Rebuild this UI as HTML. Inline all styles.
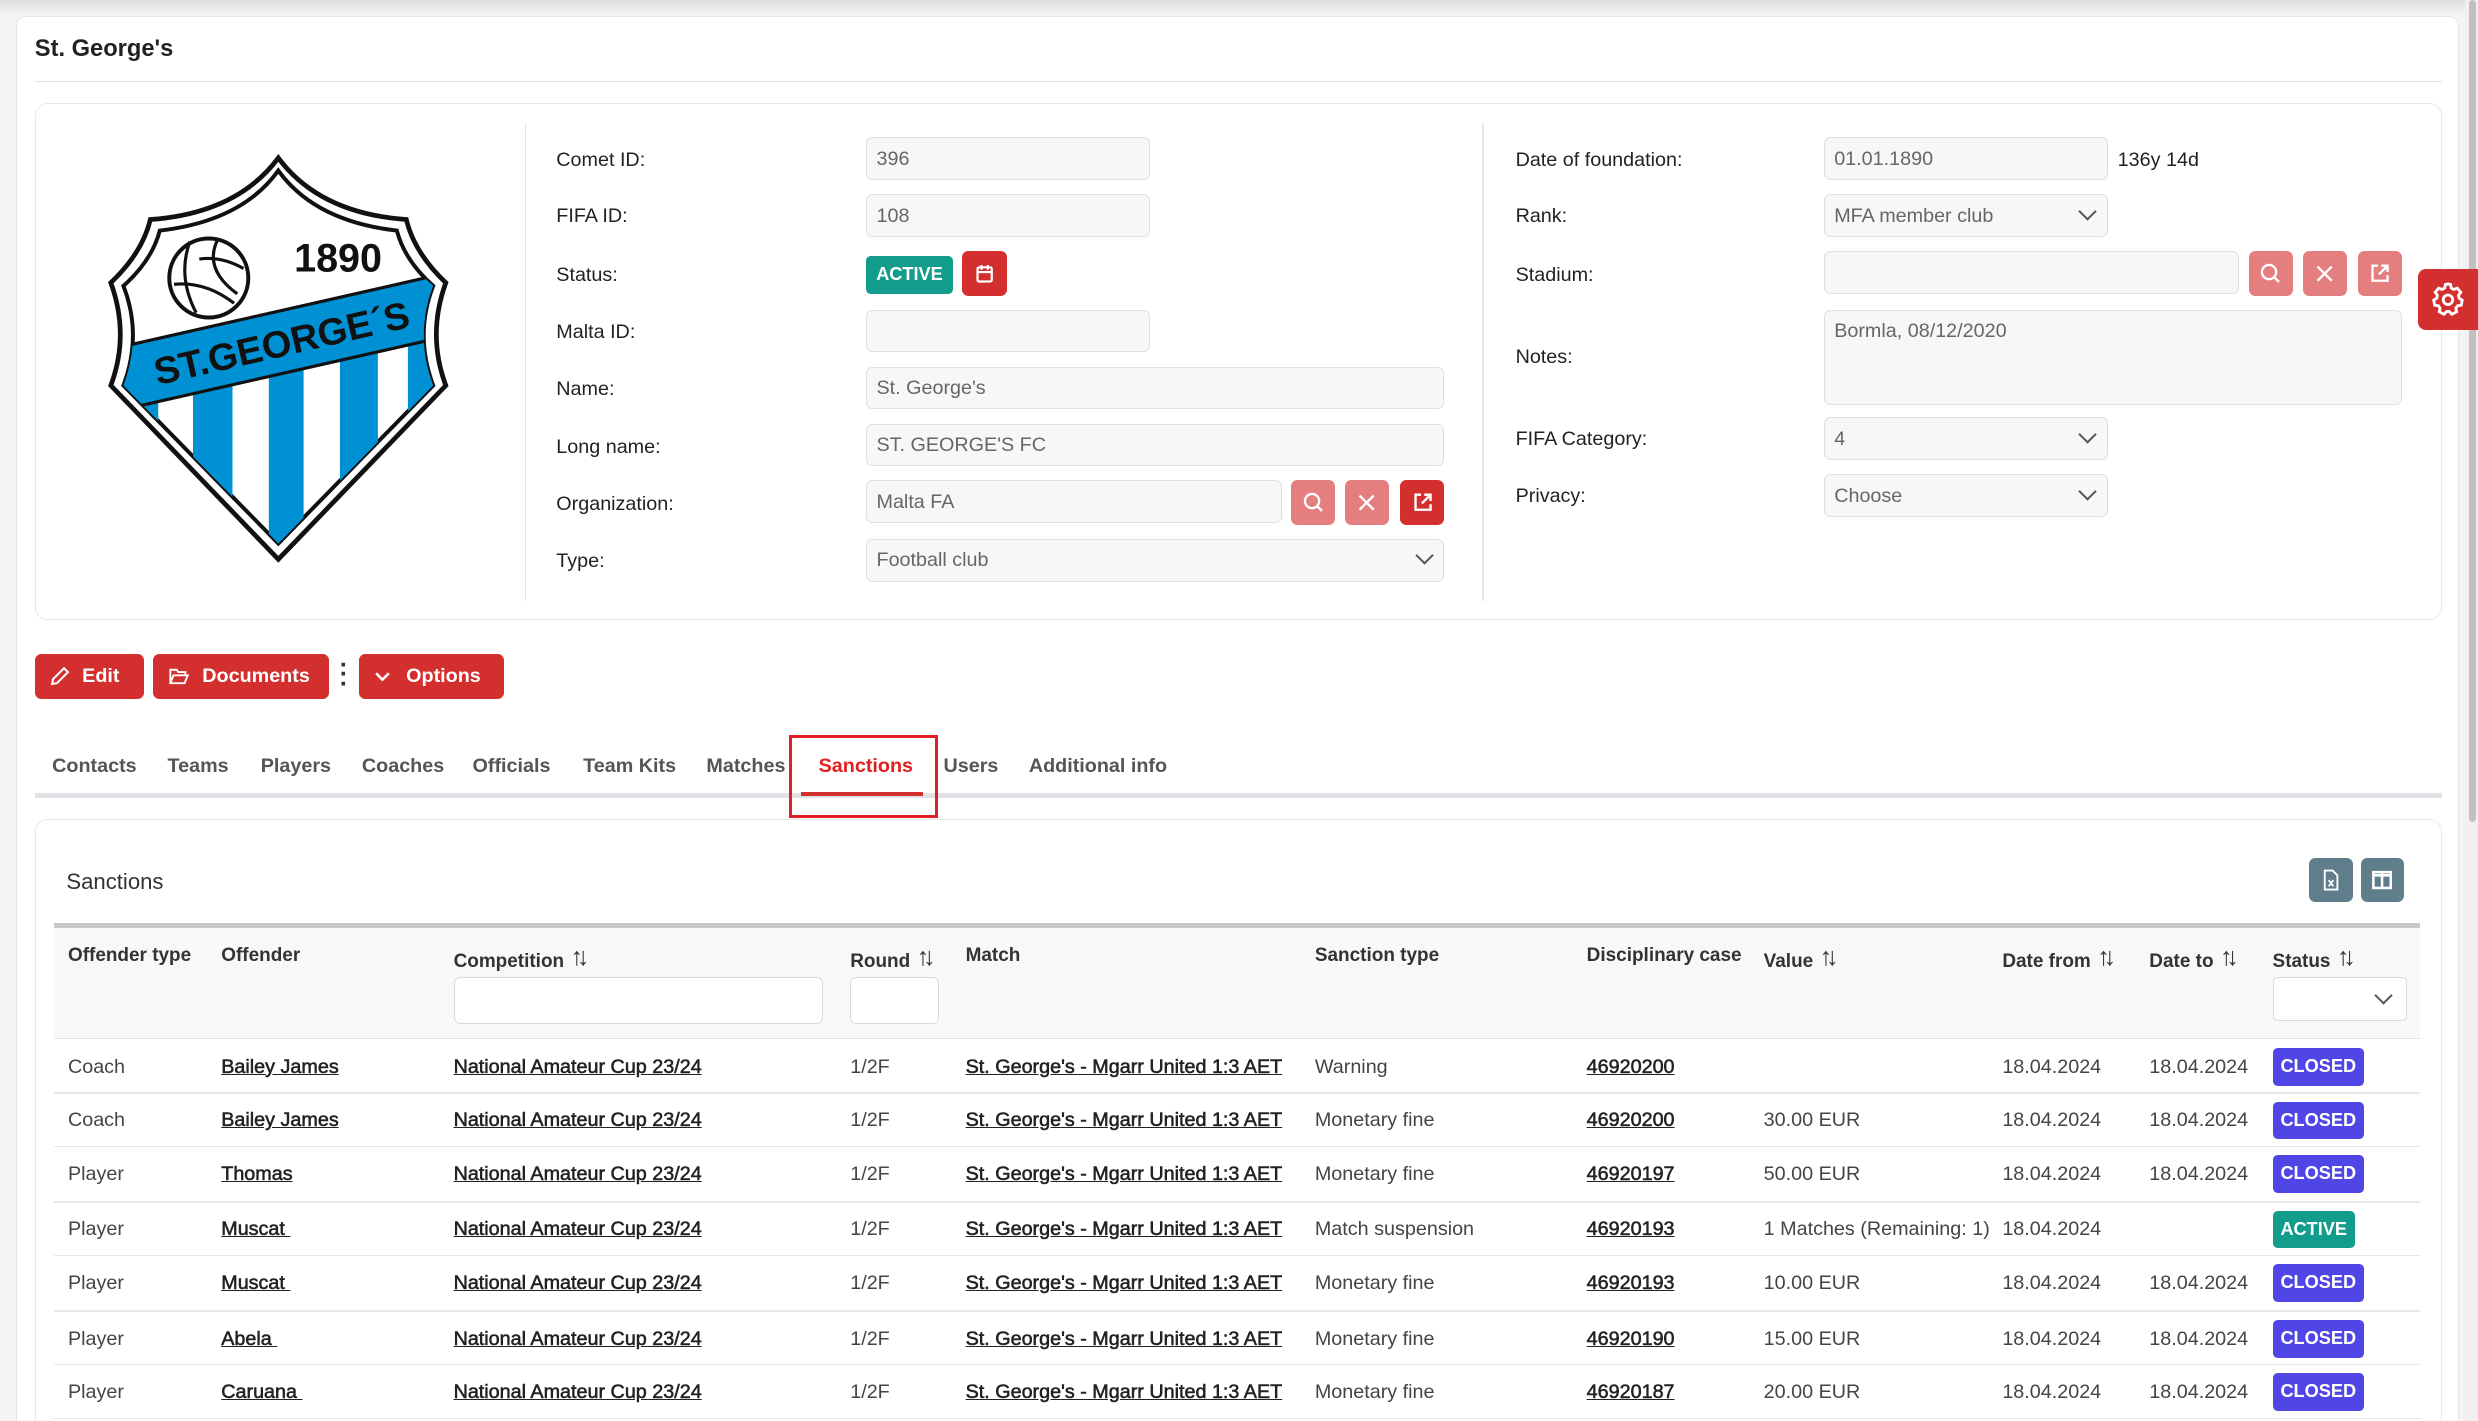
<!DOCTYPE html>
<html><head><meta charset="utf-8"><style>
html,body{margin:0;padding:0;background:#f4f4f5;overflow:hidden}
body{zoom:1.58036;width:1568px;height:899px;position:relative;font-family:"Liberation Sans",sans-serif;color:#333;font-size:12.5px}
.a{position:absolute}
.topbar{left:0;top:0;width:1568px;height:9px;background:linear-gradient(#dcdcdc,#f4f4f5)}
.outer{left:10px;top:10px;width:1545px;height:900px;background:#fff;border:1px solid #e6e6e6;border-radius:6px}
.sb{left:1560px;top:0;width:8px;height:899px;background:#f0f0f0}
.sbt{left:1562px;top:0;width:5px;height:520px;background:#c1c1c1;border-radius:3px}
.card{border:1px solid #e7e8ea;border-radius:8px;background:#fff}
.lbl{font-size:12.5px;color:#222}
.inp{background:#f7f7f7;border:1px solid #dcdfe3;border-radius:4px;height:27px;box-sizing:border-box;font-size:12.5px;color:#666;padding:6px 6px;line-height:14px}
.chev{position:absolute;right:8px;top:8px;width:7px;height:7px;border-right:1.3px solid #555;border-bottom:1.3px solid #555;transform:rotate(45deg);top:6px}
.ib{width:28px;height:28px;border-radius:4px;background:#e57f7f;box-sizing:border-box}
.ib.d{background:#d32f2f}
.ib svg{display:block;margin:6px}
.btn{background:#d32f2f;color:#fff;border-radius:4px;height:28px;font-size:12.5px;font-weight:bold;line-height:28px;box-sizing:border-box}
.tab{top:478px;font-size:12.5px;font-weight:bold;color:#555}
.th{top:598px;font-weight:bold;font-size:12px;color:#333}
.srt{font-weight:normal;font-size:16px;margin-left:4px;letter-spacing:-4px;color:#333;position:relative;top:-1px}
.td{font-size:12.5px;color:#444}
.lk{color:#222;text-decoration:underline;font-weight:normal;-webkit-text-stroke:0.35px #222}
.bdg{left:1438px;height:24px;line-height:24px;padding:0 5px;color:#fff;font-weight:bold;font-size:11.5px;border-radius:3px;background:#4f46e5}
.bdg.g{background:#119c8b}
.rl{left:34px;width:1497px;height:1px;background:#e8e8e8}
</style></head><body>
<div class="a topbar"></div>
<div class="a outer"></div>
<div class="a sb"></div><div class="a sbt"></div>
<div class="a" style="left:22px;top:23px;font-size:15px;font-weight:bold;color:#222">St. George's</div>
<div class="a" style="left:22px;top:51px;width:1523px;height:1px;background:#e0e0e0"></div>

<div class="a card" style="left:22px;top:65px;width:1522px;height:326px"></div>
<div class="a" style="left:332px;top:78px;width:1px;height:302px;background:#e6e6e6"></div>
<div class="a" style="left:938px;top:78px;width:1px;height:302px;background:#e6e6e6"></div>

<svg class="a" style="left:60px;top:95px" width="240" height="265" viewBox="60 95 240 265">
<defs><clipPath id="cp"><path d="M176,108 Q153,140 101,146 Q96,165 78,181 Q90,212 78,244 L176,344 L274,244 Q262,212 274,181 Q256,165 251,146 Q199,140 176,108Z"/></clipPath></defs>
<path d="M176,100 Q150,135 95,139 Q90,160 70,179 Q82,212 70,244 L176,354 L282,244 Q270,212 282,179 Q262,160 257,139 Q202,135 176,100Z" fill="#fff" stroke="#111" stroke-width="3"/>
<path d="M176,108 Q153,140 101,146 Q96,165 78,181 Q90,212 78,244 L176,344 L274,244 Q262,212 274,181 Q256,165 251,146 Q199,140 176,108Z" fill="#fff" stroke="#111" stroke-width="2.5"/>
<g clip-path="url(#cp)">
<rect x="80" y="240" width="20" height="130" fill="#0091d5"/>
<rect x="122" y="230" width="25" height="140" fill="#0091d5"/>
<rect x="170" y="220" width="22" height="150" fill="#0091d5"/>
<rect x="215" y="210" width="24" height="160" fill="#0091d5"/>
<rect x="258" y="200" width="20" height="170" fill="#0091d5"/>
<polygon points="70,221 282,173 282,213 70,261" fill="#0091d5" stroke="#111" stroke-width="2"/>
</g>
<text x="178" y="226" text-anchor="middle" transform="rotate(-13 176 217)" font-family="Liberation Sans" font-weight="bold" font-size="24" fill="#111" textLength="165" lengthAdjust="spacingAndGlyphs">ST.GEORGE´S</text>
<circle cx="132" cy="176" r="25" fill="#fff" stroke="#111" stroke-width="2.5"/>
<path d="M120,153 Q112,175 124,198 M138,151 Q128,170 150,186 M110,180 Q130,178 148,192 M126,164 Q140,162 154,170" fill="none" stroke="#111" stroke-width="2"/>
<text x="186" y="172" font-family="Liberation Sans" font-weight="bold" font-size="25" fill="#111">1890</text>
</svg>

<!-- left fields -->
<div class="a lbl" style="left:352px;top:94px">Comet ID:</div>
<div class="a inp" style="left:548px;top:87px;width:180px">396</div>
<div class="a lbl" style="left:352px;top:130px">FIFA ID:</div>
<div class="a inp" style="left:548px;top:123px;width:180px">108</div>
<div class="a lbl" style="left:352px;top:167px">Status:</div>
<div class="a" style="left:548px;top:162px;width:55px;height:24px;background:#119c8b;border-radius:3px;color:#fff;font-weight:bold;font-size:11.5px;line-height:24px;text-align:center">ACTIVE</div>
<div class="a ib d" style="left:609px;top:159px;width:28px;height:28px"><svg width="16" height="16" viewBox="0 0 16 16"><rect x="3.5" y="4" width="9" height="9" rx="1" fill="none" stroke="#fff" stroke-width="1.4"/><path d="M3.5,7h9M6,2.5v3M10,2.5v3" stroke="#fff" stroke-width="1.4"/></svg></div>
<div class="a lbl" style="left:352px;top:203px">Malta ID:</div>
<div class="a inp" style="left:548px;top:196px;width:180px"></div>
<div class="a lbl" style="left:352px;top:239px">Name:</div>
<div class="a inp" style="left:548px;top:232px;width:366px">St. George's</div>
<div class="a lbl" style="left:352px;top:276px">Long name:</div>
<div class="a inp" style="left:548px;top:268px;width:366px">ST. GEORGE'S FC</div>
<div class="a lbl" style="left:352px;top:312px">Organization:</div>
<div class="a inp" style="left:548px;top:304px;width:263px">Malta FA</div>
<div class="a ib" style="left:817px;top:304px"><svg width="16" height="16" viewBox="0 0 16 16"><circle cx="7" cy="7" r="4.5" fill="none" stroke="#fff" stroke-width="1.5"/><path d="M10.3,10.3l3,3" stroke="#fff" stroke-width="1.5"/></svg></div>
<div class="a ib" style="left:851px;top:304px"><svg width="16" height="16" viewBox="0 0 16 16"><path d="M3.5,3.5l9,9M12.5,3.5l-9,9" stroke="#fff" stroke-width="1.5"/></svg></div>
<div class="a ib d" style="left:886px;top:304px"><svg width="16" height="16" viewBox="0 0 16 16"><path d="M7,3H3.5v9.5H13V9M9,3h4v4M13,3L7.5,8.5" fill="none" stroke="#fff" stroke-width="1.5"/></svg></div>
<div class="a lbl" style="left:352px;top:348px">Type:</div>
<div class="a inp" style="left:548px;top:341px;width:366px">Football club<span class="chev"></span></div>

<!-- right fields -->
<div class="a lbl" style="left:959px;top:94px">Date of foundation:</div>
<div class="a inp" style="left:1154px;top:87px;width:180px">01.01.1890</div>
<div class="a lbl" style="left:1340px;top:94px">136y 14d</div>
<div class="a lbl" style="left:959px;top:130px">Rank:</div>
<div class="a inp" style="left:1154px;top:123px;width:180px">MFA member club<span class="chev"></span></div>
<div class="a lbl" style="left:959px;top:167px">Stadium:</div>
<div class="a inp" style="left:1154px;top:159px;width:263px"></div>
<div class="a ib" style="left:1423px;top:159px"><svg width="16" height="16" viewBox="0 0 16 16"><circle cx="7" cy="7" r="4.5" fill="none" stroke="#fff" stroke-width="1.5"/><path d="M10.3,10.3l3,3" stroke="#fff" stroke-width="1.5"/></svg></div>
<div class="a ib" style="left:1457px;top:159px"><svg width="16" height="16" viewBox="0 0 16 16"><path d="M3.5,3.5l9,9M12.5,3.5l-9,9" stroke="#fff" stroke-width="1.5"/></svg></div>
<div class="a ib" style="left:1492px;top:159px"><svg width="16" height="16" viewBox="0 0 16 16"><path d="M7,3H3.5v9.5H13V9M9,3h4v4M13,3L7.5,8.5" fill="none" stroke="#fff" stroke-width="1.5"/></svg></div>
<div class="a lbl" style="left:959px;top:219px">Notes:</div>
<div class="a inp" style="left:1154px;top:196px;width:366px;height:60px">Bormla, 08/12/2020</div>
<div class="a lbl" style="left:959px;top:271px">FIFA Category:</div>
<div class="a inp" style="left:1154px;top:264px;width:180px">4<span class="chev"></span></div>
<div class="a lbl" style="left:959px;top:307px">Privacy:</div>
<div class="a inp" style="left:1154px;top:300px;width:180px">Choose<span class="chev"></span></div>

<div class="a" style="left:1530px;top:170px;width:38px;height:39px;background:#d32f2f;border-radius:5px 0 0 5px"><svg width="24" height="24" viewBox="0 0 24 24" style="margin:7px"><path d="M12,2.5l1.6,0.3 0.5,2.3 1.6,0.9 2.2-0.8 2.2,2.6-1.4,1.9 0.3,1.8 2,1.2-0.6,3.3-2.3,0.3-1.1,1.5 0.5,2.3-3,1.6-1.6-1.7h-1.8l-1.6,1.7-3-1.6 0.5-2.3-1.1-1.5-2.3-0.3-0.6-3.3 2-1.2 0.3-1.8-1.4-1.9 2.2-2.6 2.2,0.8 1.6-0.9 0.5-2.3z" fill="none" stroke="#fff" stroke-width="1.8"/><circle cx="12" cy="12.5" r="3" fill="none" stroke="#fff" stroke-width="1.8"/></svg></div>

<!-- action buttons -->
<div class="a btn" style="left:22px;top:414px;width:69px;padding-left:30px">Edit<svg class="a" style="left:9px;top:7px" width="14" height="14" viewBox="0 0 14 14"><path d="M2,12l0.5-3 7-7 2.5,2.5-7,7z" fill="none" stroke="#fff" stroke-width="1.3"/></svg></div>
<div class="a btn" style="left:97px;top:414px;width:111px;padding-left:31px">Documents<svg class="a" style="left:9px;top:7px" width="14" height="14" viewBox="0 0 14 14"><path d="M1.5,11.5V3h4l1,1.5h4.5v2M1.5,11.5l2-5h9l-2,5z" fill="none" stroke="#fff" stroke-width="1.2"/></svg></div>
<div class="a" style="left:215px;top:418px;font-weight:bold;font-size:16px;line-height:6px;color:#333">·<br>·<br>·</div>
<div class="a btn" style="left:227px;top:414px;width:92px;padding-left:30px">Options<svg class="a" style="left:9px;top:8px" width="12" height="12" viewBox="0 0 12 12"><path d="M2,4l4,4 4-4" fill="none" stroke="#fff" stroke-width="1.6"/></svg></div>

<!-- tabs -->
<div class="a tab" style="left:33px">Contacts</div>
<div class="a tab" style="left:106px">Teams</div>
<div class="a tab" style="left:165px">Players</div>
<div class="a tab" style="left:229px">Coaches</div>
<div class="a tab" style="left:299px">Officials</div>
<div class="a tab" style="left:369px">Team Kits</div>
<div class="a tab" style="left:447px">Matches</div>
<div class="a tab" style="left:518px;color:#e01f1f">Sanctions</div>
<div class="a tab" style="left:597px">Users</div>
<div class="a tab" style="left:651px">Additional info</div>
<div class="a" style="left:22px;top:502px;width:1523px;height:3px;background:#dfe1e4"></div>
<div class="a" style="left:507px;top:501px;width:77px;height:3px;background:#d32f2f"></div>
<div class="a" style="left:499px;top:465px;width:91px;height:49px;border:2px solid #e51d24"></div>

<!-- sanctions card -->
<div class="a card" style="left:22px;top:518px;width:1522px;height:400px;border-bottom:none"></div>
<div class="a" style="left:42px;top:550px;font-size:14px;color:#333">Sanctions</div>
<div class="a" style="left:1461px;top:543px;width:28px;height:28px;background:#607d8b;border-radius:4px"><svg width="14" height="14" viewBox="0 0 14 14" style="margin:7px"><path d="M3,1h5l3,3v9H3z" fill="none" stroke="#fff" stroke-width="1.2"/><path d="M5.5,7l3,4M8.5,7l-3,4" stroke="#fff" stroke-width="1.1"/></svg></div>
<div class="a" style="left:1494px;top:543px;width:27px;height:28px;background:#607d8b;border-radius:4px"><svg width="14" height="14" viewBox="0 0 14 14" style="margin:7px 6px"><rect x="1.5" y="2" width="11" height="10" fill="none" stroke="#fff" stroke-width="1.6"/><path d="M7,2v10M1.5,4h11" stroke="#fff" stroke-width="1.6"/></svg></div>

<div class="a" style="left:34px;top:584px;width:1497px;height:3px;background:#c9c9c9"></div>
<div class="a" style="left:34px;top:587px;width:1497px;height:70px;background:#f7f8fa;border-bottom:1px solid #e3e3e3"></div>
<div class="a th" style="left:43px">Offender type</div>
<div class="a th" style="left:140px">Offender</div>
<div class="a th" style="left:287px">Competition<span class="srt">↑↓</span></div>
<div class="a th" style="left:538px">Round<span class="srt">↑↓</span></div>
<div class="a th" style="left:611px">Match</div>
<div class="a th" style="left:832px">Sanction type</div>
<div class="a th" style="left:1004px">Disciplinary case</div>
<div class="a th" style="left:1116px">Value<span class="srt">↑↓</span></div>
<div class="a th" style="left:1267px">Date from<span class="srt">↑↓</span></div>
<div class="a th" style="left:1360px">Date to<span class="srt">↑↓</span></div>
<div class="a th" style="left:1438px">Status<span class="srt">↑↓</span></div>
<div class="a" style="left:287px;top:618px;width:234px;height:30px;background:#fff;border:1px solid #d9d9d9;border-radius:4px;box-sizing:border-box"></div>
<div class="a" style="left:538px;top:618px;width:56px;height:30px;background:#fff;border:1px solid #d9d9d9;border-radius:4px;box-sizing:border-box"></div>
<div class="a" style="left:1438px;top:618px;width:85px;height:28px;background:#fff;border:1px solid #d9d9d9;border-radius:3px;box-sizing:border-box"><span class="chev" style="right:10px;top:7px"></span></div>

<!-- rows -->
<div class="a td" style="left:43px;top:668px">Coach</div><div class="a td lk" style="left:140px;top:668px">Bailey James</div><div class="a td lk" style="left:287px;top:668px">National Amateur Cup 23/24</div><div class="a td" style="left:538px;top:668px">1/2F</div><div class="a td lk" style="left:611px;top:668px">St. George's - Mgarr United 1:3 AET</div><div class="a td" style="left:832px;top:668px">Warning</div><div class="a td lk" style="left:1004px;top:668px">46920200</div><div class="a td" style="left:1267px;top:668px">18.04.2024</div><div class="a td" style="left:1360px;top:668px">18.04.2024</div><div class="a bdg" style="top:663px">CLOSED</div>
<div class="a rl" style="top:691px"></div>
<div class="a td" style="left:43px;top:702px">Coach</div><div class="a td lk" style="left:140px;top:702px">Bailey James</div><div class="a td lk" style="left:287px;top:702px">National Amateur Cup 23/24</div><div class="a td" style="left:538px;top:702px">1/2F</div><div class="a td lk" style="left:611px;top:702px">St. George's - Mgarr United 1:3 AET</div><div class="a td" style="left:832px;top:702px">Monetary fine</div><div class="a td lk" style="left:1004px;top:702px">46920200</div><div class="a td" style="left:1116px;top:702px">30.00 EUR</div><div class="a td" style="left:1267px;top:702px">18.04.2024</div><div class="a td" style="left:1360px;top:702px">18.04.2024</div><div class="a bdg" style="top:697px">CLOSED</div>
<div class="a rl" style="top:725px"></div>
<div class="a td" style="left:43px;top:736px">Player</div><div class="a td lk" style="left:140px;top:736px">Thomas</div><div class="a td lk" style="left:287px;top:736px">National Amateur Cup 23/24</div><div class="a td" style="left:538px;top:736px">1/2F</div><div class="a td lk" style="left:611px;top:736px">St. George's - Mgarr United 1:3 AET</div><div class="a td" style="left:832px;top:736px">Monetary fine</div><div class="a td lk" style="left:1004px;top:736px">46920197</div><div class="a td" style="left:1116px;top:736px">50.00 EUR</div><div class="a td" style="left:1267px;top:736px">18.04.2024</div><div class="a td" style="left:1360px;top:736px">18.04.2024</div><div class="a bdg" style="top:731px">CLOSED</div>
<div class="a rl" style="top:760px"></div>
<div class="a td" style="left:43px;top:771px">Player</div><div class="a td lk" style="left:140px;top:771px">Muscat&nbsp;</div><div class="a td lk" style="left:287px;top:771px">National Amateur Cup 23/24</div><div class="a td" style="left:538px;top:771px">1/2F</div><div class="a td lk" style="left:611px;top:771px">St. George's - Mgarr United 1:3 AET</div><div class="a td" style="left:832px;top:771px">Match suspension</div><div class="a td lk" style="left:1004px;top:771px">46920193</div><div class="a td" style="left:1116px;top:771px">1 Matches (Remaining: 1)</div><div class="a td" style="left:1267px;top:771px">18.04.2024</div><div class="a bdg g" style="top:766px">ACTIVE</div>
<div class="a rl" style="top:794px"></div>
<div class="a td" style="left:43px;top:805px">Player</div><div class="a td lk" style="left:140px;top:805px">Muscat&nbsp;</div><div class="a td lk" style="left:287px;top:805px">National Amateur Cup 23/24</div><div class="a td" style="left:538px;top:805px">1/2F</div><div class="a td lk" style="left:611px;top:805px">St. George's - Mgarr United 1:3 AET</div><div class="a td" style="left:832px;top:805px">Monetary fine</div><div class="a td lk" style="left:1004px;top:805px">46920193</div><div class="a td" style="left:1116px;top:805px">10.00 EUR</div><div class="a td" style="left:1267px;top:805px">18.04.2024</div><div class="a td" style="left:1360px;top:805px">18.04.2024</div><div class="a bdg" style="top:800px">CLOSED</div>
<div class="a rl" style="top:829px"></div>
<div class="a td" style="left:43px;top:840px">Player</div><div class="a td lk" style="left:140px;top:840px">Abela&nbsp;</div><div class="a td lk" style="left:287px;top:840px">National Amateur Cup 23/24</div><div class="a td" style="left:538px;top:840px">1/2F</div><div class="a td lk" style="left:611px;top:840px">St. George's - Mgarr United 1:3 AET</div><div class="a td" style="left:832px;top:840px">Monetary fine</div><div class="a td lk" style="left:1004px;top:840px">46920190</div><div class="a td" style="left:1116px;top:840px">15.00 EUR</div><div class="a td" style="left:1267px;top:840px">18.04.2024</div><div class="a td" style="left:1360px;top:840px">18.04.2024</div><div class="a bdg" style="top:835px">CLOSED</div>
<div class="a rl" style="top:863px"></div>
<div class="a td" style="left:43px;top:874px">Player</div><div class="a td lk" style="left:140px;top:874px">Caruana&nbsp;</div><div class="a td lk" style="left:287px;top:874px">National Amateur Cup 23/24</div><div class="a td" style="left:538px;top:874px">1/2F</div><div class="a td lk" style="left:611px;top:874px">St. George's - Mgarr United 1:3 AET</div><div class="a td" style="left:832px;top:874px">Monetary fine</div><div class="a td lk" style="left:1004px;top:874px">46920187</div><div class="a td" style="left:1116px;top:874px">20.00 EUR</div><div class="a td" style="left:1267px;top:874px">18.04.2024</div><div class="a td" style="left:1360px;top:874px">18.04.2024</div><div class="a bdg" style="top:869px">CLOSED</div>
<div class="a rl" style="top:897px"></div>
</body></html>
